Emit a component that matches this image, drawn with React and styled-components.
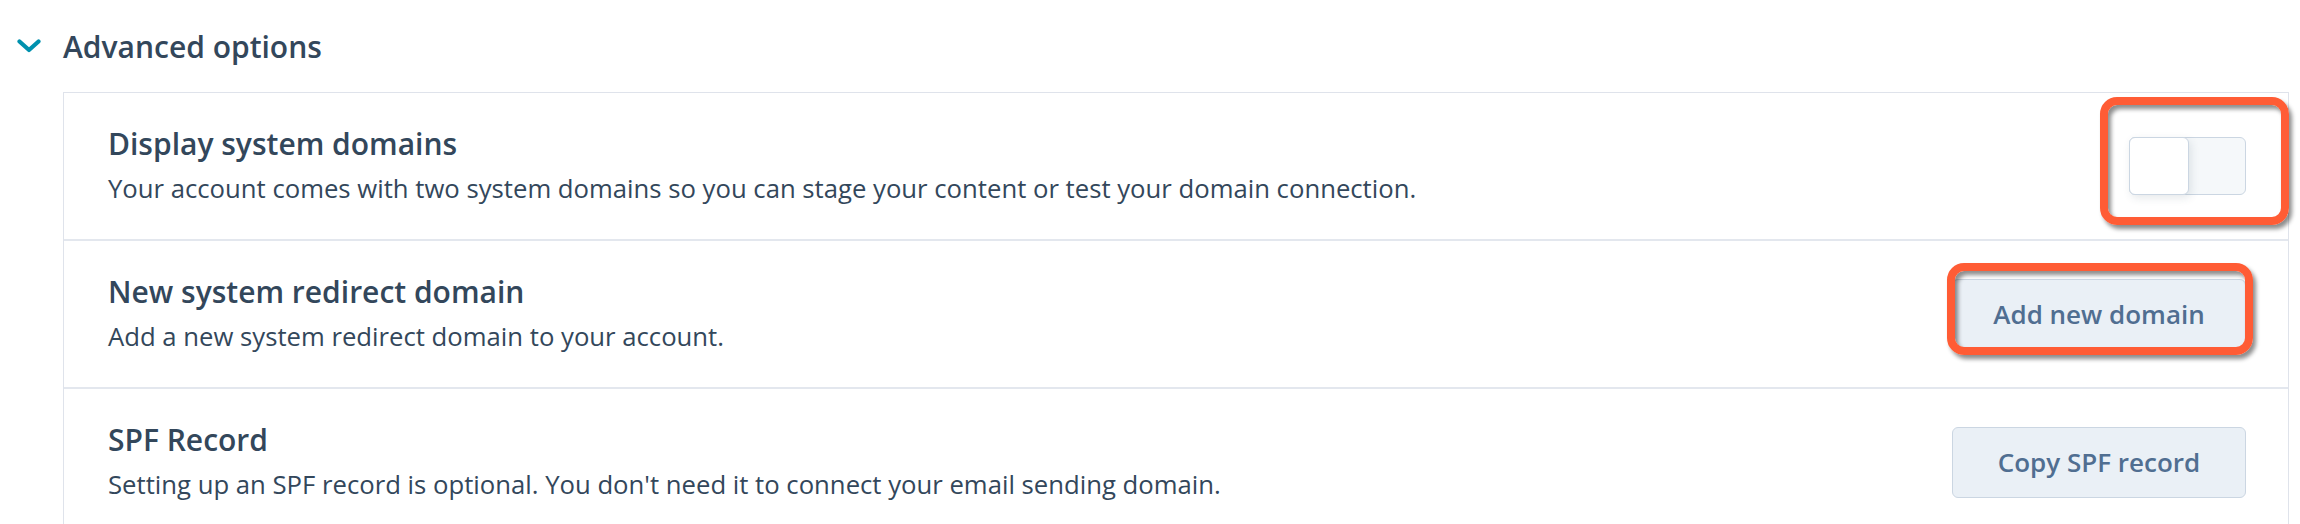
import React from "react";
import styled, { createGlobalStyle } from "styled-components";

const Global = createGlobalStyle`
  html, body { margin: 0; padding: 0; background: #ffffff; }
  body { font-family: "Open Sans", Lato, Arial, sans-serif; color: #33475b; }
  * { box-sizing: border-box; }
`;

const Page = styled.div`
  width: 2300px;
  height: 524px;
  overflow: hidden;
  background: #fff;
`;

const Header = styled.div`
  display: flex;
  align-items: center;
  height: 92px;
  padding-left: 17px;
  gap: 22px;
`;

const Chevron = styled.svg`
  width: 24px;
  height: 14px;
  flex: none;
`;

const HeaderTitle = styled.h2`
  margin: 0;
  font-size: 30px;
  font-weight: 600;
  color: #33475b;
`;

const Card = styled.div`
  margin-left: 63px;
  margin-right: 11px;
  border: 1px solid #dfe3eb;
  border-bottom: none;
  background: #fff;
`;

const Row = styled.div`
  display: flex;
  align-items: center;
  justify-content: space-between;
  height: ${(p) => p.$h}px;
  padding: 0 42px 0 44px;
  border-top: ${(p) => (p.$first ? "none" : "2px solid #e3e7ee")};
`;

const Text = styled.div`
  display: flex;
  flex-direction: column;
  gap: 12px;
`;

const Title = styled.div`
  font-size: 30px;
  line-height: 34px;
  font-weight: 600;
  color: #33475b;
`;

const Desc = styled.div`
  font-size: 25.7px;
  line-height: 32px;
  font-weight: 400;
  color: #33475b;
`;

const Control = styled.div`
  position: relative;
  flex: none;
  display: flex;
`;

const Track = styled.div`
  width: 117px;
  height: 58px;
  border: 1px solid #cbd6e2;
  border-radius: 6px;
  background: #f5f8fa;
  display: flex;
  align-items: stretch;
`;

const Knob = styled.div`
  width: 60px;
  margin: -1px 0 -1px -1px;
  background: #fff;
  border: 1.5px solid #cbd6e2;
  border-radius: 6px;
  box-shadow: 2px 3px 8px rgba(45, 62, 80, 0.12);
`;

const Button = styled.button`
  width: 294px;
  height: 71px;
  border: 1px solid #cbd6e2;
  border-radius: 6px;
  background: #eaf0f6;
  color: #506e91;
  font-family: "Open Sans", Lato, Arial, sans-serif;
  font-weight: 600;
  font-size: 26px;
  padding: 0;
  cursor: pointer;
`;

const Highlight = styled.div`
  position: absolute;
  top: ${(p) => p.$t}px;
  left: ${(p) => p.$l}px;
  right: ${(p) => p.$r}px;
  bottom: ${(p) => p.$b}px;
  border: 8px solid #ff5c35;
  border-radius: 17px;
  box-shadow: 3px 4px 4px rgba(0, 0, 0, 0.45), inset 3px 4px 4px rgba(0, 0, 0, 0.45);
  pointer-events: none;
`;

export default function App() {
  return (
    <Page>
      <Global />
      <Header>
        <Chevron viewBox="0 0 24 14" aria-hidden="true">
          <path d="M2.5 2.5 L12 11 L21.5 2.5" fill="none" stroke="#0091ae" strokeWidth="4.2" strokeLinecap="round" strokeLinejoin="round" />
        </Chevron>
        <HeaderTitle>Advanced options</HeaderTitle>
      </Header>
      <Card>
        <Row $first $h={146}>
          <Text>
            <Title>Display system domains</Title>
            <Desc>Your account comes with two system domains so you can stage your content or test your domain connection.</Desc>
          </Text>
          <Control>
            <Track>
              <Knob />
            </Track>
            <Highlight $t={-40} $l={-29} $r={-43} $b={-30} />
          </Control>
        </Row>
        <Row $h={148}>
          <Text>
            <Title>New system redirect domain</Title>
            <Desc>Add a new system redirect domain to your account.</Desc>
          </Text>
          <Control>
            <Button>Add new domain</Button>
            <Highlight $t={-16} $l={-5} $r={-7} $b={-5} />
          </Control>
        </Row>
        <Row $h={148}>
          <Text>
            <Title>SPF Record</Title>
            <Desc>Setting up an SPF record is optional. You don't need it to connect your email sending domain.</Desc>
          </Text>
          <Control>
            <Button>Copy SPF record</Button>
          </Control>
        </Row>
      </Card>
    </Page>
  );
}
